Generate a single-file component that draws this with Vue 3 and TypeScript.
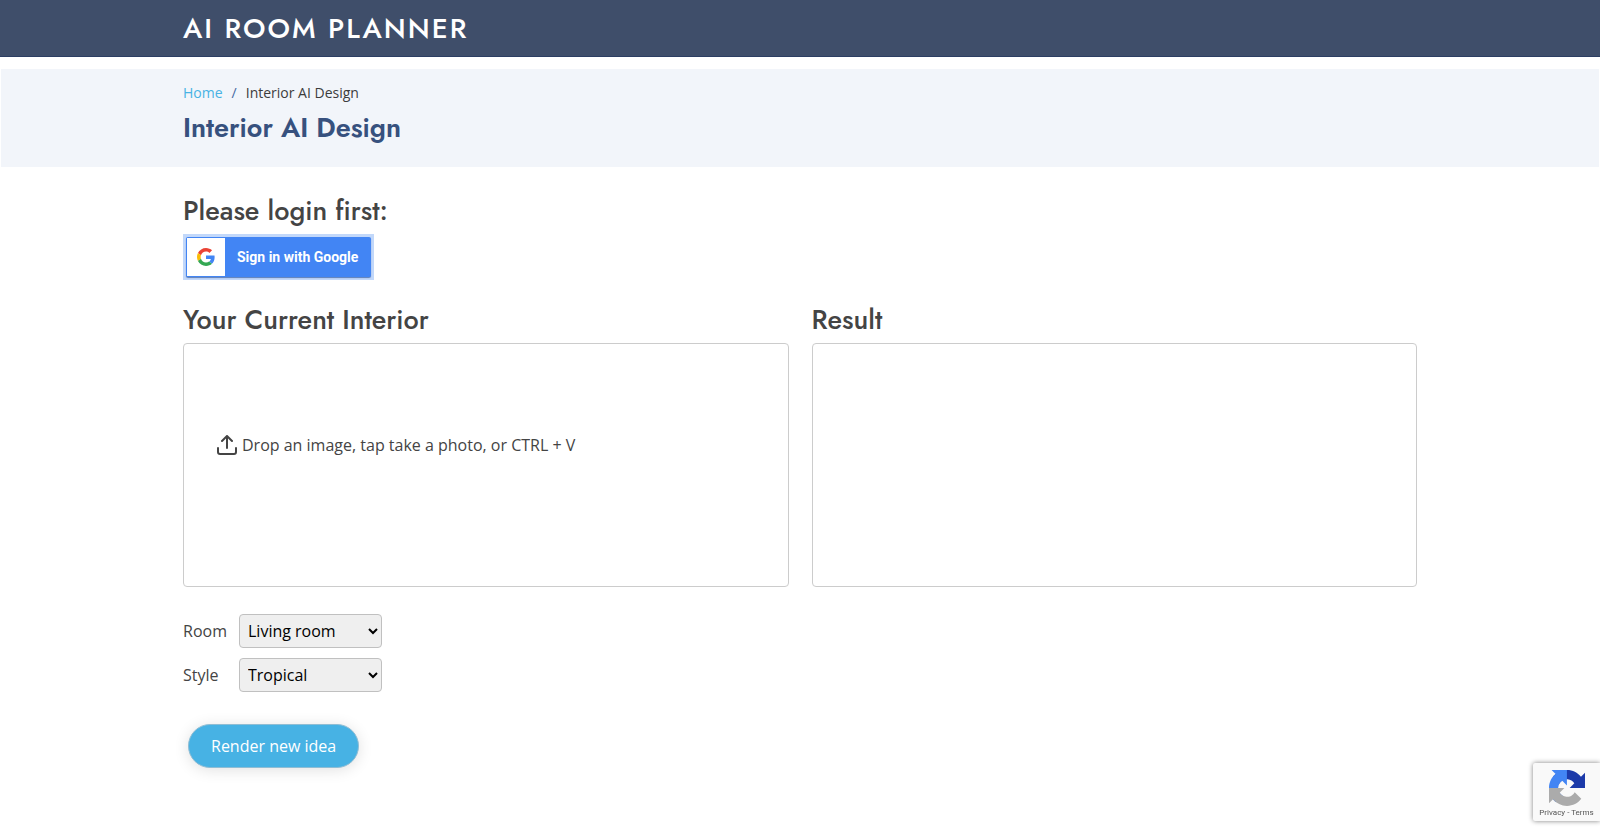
<script setup lang="ts">
import { ref } from 'vue'

const rooms: string[] = ['Living room', 'Bedroom', 'Kitchen', 'Bathroom', 'Dining room', 'Home office']
const styles: string[] = ['Tropical', 'Modern', 'Minimalist', 'Scandinavian', 'Industrial', 'Contemporary']
const room = ref<string>('Living room')
const style = ref<string>('Tropical')
</script>

<template>
  <div class="page">
    <header class="header">
      <div class="container">
        <a class="logo" href="#">AI ROOM PLANNER</a>
      </div>
    </header>

    <main>
      <section class="breadcrumbs">
        <div class="container">
          <nav class="trail" aria-label="Breadcrumb">
            <a href="#">Home</a>
            <span class="slash">/</span>
            <span>Interior AI Design</span>
          </nav>
          <h1>Interior AI Design</h1>
        </div>
      </section>

      <section class="container content">
        <h2>Please login first:</h2>
        <button class="google" type="button">
          <span class="google-face">
            <span class="google-mark">
              <svg viewBox="0 0 48 48" width="18" height="18" aria-hidden="true">
                <path fill="#EA4335" d="M24 9.5c3.54 0 6.71 1.22 9.21 3.6l6.85-6.85C35.9 2.38 30.47 0 24 0 14.62 0 6.51 5.38 2.56 13.22l7.98 6.19C12.43 13.72 17.74 9.5 24 9.5z" />
                <path fill="#4285F4" d="M46.98 24.55c0-1.57-.15-3.09-.38-4.55H24v9.02h12.94c-.58 2.96-2.26 5.48-4.78 7.18l7.73 6c4.51-4.18 7.09-10.36 7.09-17.65z" />
                <path fill="#FBBC05" d="M10.53 28.59c-.48-1.45-.76-2.99-.76-4.59s.27-3.14.76-4.59l-7.98-6.19C.92 16.46 0 20.12 0 24c0 3.88.92 7.54 2.56 10.78l7.97-6.19z" />
                <path fill="#34A853" d="M24 48c6.48 0 11.93-2.13 15.89-5.81l-7.73-6c-2.15 1.45-4.92 2.3-8.16 2.3-6.26 0-11.57-4.22-13.47-9.91l-7.98 6.19C6.51 42.62 14.62 48 24 48z" />
              </svg>
            </span>
            <span class="google-text">Sign in with Google</span>
          </span>
        </button>

        <div class="columns">
          <div class="column">
            <h2>Your Current Interior</h2>
            <button class="panel drop" type="button">
              <svg viewBox="0 0 20 20" width="20" height="20" fill="none" stroke="#444" stroke-width="2" stroke-linecap="round" stroke-linejoin="round" aria-hidden="true">
                <path d="M1 13v4a2 2 0 0 0 2 2h14a2 2 0 0 0 2-2v-4" />
                <path d="M10 13V2M5 6l5-5 5 5" />
              </svg>
              <span>Drop an image, tap take a photo, or CTRL + V</span>
            </button>
          </div>
          <div class="column">
            <h2>Result</h2>
            <div class="panel"></div>
          </div>
        </div>

        <form class="options" @submit.prevent>
          <div class="fields">
            <label for="room">Room</label>
            <select id="room" v-model="room">
              <option v-for="item in rooms" :key="item">{{ item }}</option>
            </select>
            <label for="style">Style</label>
            <select id="style" v-model="style">
              <option v-for="item in styles" :key="item">{{ item }}</option>
            </select>
          </div>
          <button class="render" type="submit">Render new idea</button>
        </form>
      </section>
    </main>

    <aside class="captcha">
      <svg viewBox="0 0 64 64" width="36" height="36" aria-hidden="true">
        <path fill="#1c3aa9" d="M64 31.955l-.033-1.37V4.687l-7.16 7.16C50.948 4.674 42.033.093 32.05.093c-10.4 0-19.622 4.96-25.458 12.64l11.736 11.86a15.55 15.55 0 0 1 4.754-5.334c2.05-1.6 4.952-2.906 8.968-2.906.485 0 .86.057 1.135.163 4.976.393 9.288 3.14 11.828 7.124l-8.307 8.307L64 31.953" />
        <path fill="#4285f4" d="M31.862.094l-1.37.033H4.594l7.16 7.16C4.58 13.147 0 22.06 0 32.046c0 10.4 4.96 19.622 12.64 25.458L24.5 45.768a15.55 15.55 0 0 1-5.334-4.754c-1.6-2.05-2.906-4.952-2.906-8.968 0-.485.057-.86.163-1.135.393-4.976 3.14-9.288 7.124-11.828l8.307 8.307L31.86.095" />
        <path fill="#ababab" d="M.001 32.045l.033 1.37v25.898l7.16-7.16c5.86 7.173 14.774 11.754 24.76 11.754 10.4 0 19.622-4.96 25.458-12.64l-11.736-11.86a15.55 15.55 0 0 1-4.754 5.334c-2.05 1.6-4.952 2.906-8.968 2.906-.485 0-.86-.057-1.135-.163-4.976-.393-9.288-3.14-11.828-7.124l8.307-8.307c-10.522.04-22.4.066-27.295-.005" />
      </svg>
      <div class="captcha-links"><a href="#">Privacy</a> - <a href="#">Terms</a></div>
    </aside>
  </div>
</template>

<style>
body {
  margin: 0;
  background: #fff;
}
</style>

<style scoped>
* {
  box-sizing: border-box;
}

.page {
  min-height: 100vh;
  font-family: "Open Sans", "Noto Sans", sans-serif;
  font-size: 16px;
  line-height: 24px;
  color: #444;
}

a {
  color: #47b2e4;
  text-decoration: none;
}

button,
select {
  font-family: inherit;
  font-size: 16px;
}

.container {
  width: 100%;
  max-width: 1258px;
  margin: 0 auto;
  padding: 0 12px;
}

.header {
  padding: 11px 0 10px;
  background: #3f4e6a;
  border-bottom: 1px solid #2c3e63;
}

.logo {
  display: block;
  font-family: Jost, Lato, sans-serif;
  font-size: 28px;
  font-weight: 500;
  line-height: 35px;
  letter-spacing: 2px;
  color: #fff;
}

.breadcrumbs {
  margin: 12px 1px 0;
  padding: 12px 0 22px;
  background: #f2f5fa;
}

.trail {
  display: flex;
  gap: 9px;
  font-size: 14px;
  color: #3c3c3c;
}

.slash {
  color: #4668a2;
}

h1,
h2 {
  margin: 0;
  font-family: Jost, Lato, sans-serif;
  font-size: 27px;
  line-height: 34px;
}

h1 {
  margin-top: 6px;
  font-weight: 600;
  color: #37517e;
}

h2 {
  margin-bottom: 6px;
  font-weight: 500;
}

.content {
  padding-top: 27px;
}

.google {
  display: block;
  padding: 3px;
  border: 0;
  background: #c2d8fa;
  cursor: pointer;
}

.google-face {
  display: flex;
  align-items: center;
  height: 40px;
  padding: 1px;
  border-radius: 2px;
  background: #4285f4;
  box-shadow: 0 1px 1px #5c7fb8;
}

.google-mark {
  display: grid;
  place-items: center;
  width: 38px;
  height: 38px;
  background: #fff;
}

.google-text {
  padding: 0 12px;
  font-family: Roboto, sans-serif;
  font-size: 14px;
  font-weight: 700;
  color: #fff;
}

.columns {
  display: grid;
  grid-template-columns: 1fr 1fr;
  gap: 23px;
  margin-top: 23px;
}

.panel {
  display: flex;
  align-items: center;
  width: 100%;
  min-height: 244px;
  padding: 0 33px;
  border: 1px solid #ccc;
  border-radius: 4px;
  background: #fff;
  color: #444;
}

.drop {
  gap: 5px;
  padding-bottom: 41px;
  text-align: left;
}

.fields {
  display: grid;
  grid-template-columns: 46px 143px;
  gap: 10px;
  align-items: center;
  margin-top: 27px;
}

select {
  height: 34px;
  padding: 4px;
  border: 1px solid #c0c0c0;
  border-radius: 4px;
  background: #efefef;
  color: #000;
}

.render {
  margin: 32px 5px 0;
  padding: 9px 22px;
  border: 1px solid #8fbdd4;
  border-radius: 22px;
  background: #47b2e4;
  box-shadow: 0 2px 15px rgba(0, 0, 0, 0.12);
  line-height: 24px;
  color: #fff;
}

.captcha {
  position: fixed;
  right: 0;
  bottom: 13px;
  width: 67px;
  padding: 7px 0 2px;
  border-radius: 2px 0 0 2px;
  background: #f9f9f9;
  box-shadow: 0 0 5px #808080;
  text-align: center;
}

.captcha svg {
  display: block;
  margin: 0 auto;
}

.captcha-links {
  font-family: Roboto, sans-serif;
  font-size: 8px;
  line-height: 13px;
  color: #555;
}

.captcha-links a {
  color: #555;
}
</style>
